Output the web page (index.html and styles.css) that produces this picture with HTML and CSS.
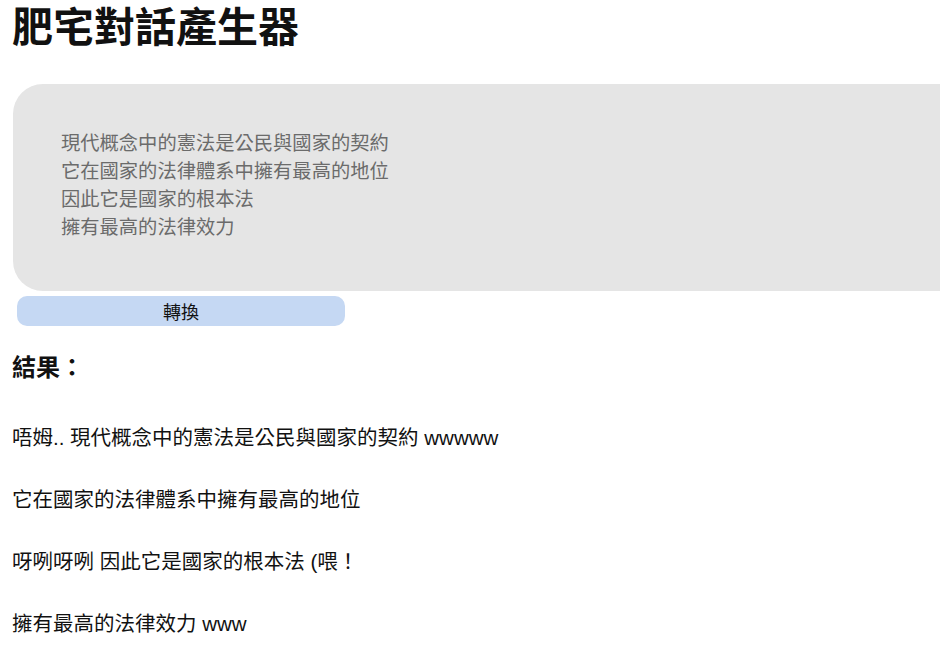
FILE: index.html
```html
<!DOCTYPE html>
<html>
<head>
    <meta charset="utf-8">
    <title>肥宅對話產生器</title>
    <link rel="stylesheet" href="styles.css">
</head>
<body>
    <h1 class="title">肥宅對話產生器</h1>

    <form id="convert_form" class="convert-form">
        <textarea id="source_text" class="source-text">現代概念中的憲法是公民與國家的契約
它在國家的法律體系中擁有最高的地位
因此它是國家的根本法
擁有最高的法律效力</textarea>
        <button type="submit" class="convert-button">轉換</button>
    </form>

    <h3 class="result-title">結果：</h3>

    <div id="result" class="result">
        <p>唔姆.. 現代概念中的憲法是公民與國家的契約 wwwww</p>
        <p>它在國家的法律體系中擁有最高的地位</p>
        <p>呀咧呀咧 因此它是國家的根本法 (喂！</p>
        <p>擁有最高的法律效力 www</p>
    </div>
</body>
</html>
```

FILE: styles.css
```css
body {
    font-family: "Liberation Sans", "Noto Sans CJK TC", sans-serif;
    margin: 0;
    padding: 0 12px;
    color: #111;
}

.title {
    font-size: 41px;
    line-height: 40px;
    margin: 8px 0 0;
}

/* the text box runs to the right edge of the window */
.convert-form {
    margin: 36px -12px 0 0;
}

.source-text {
    display: block;
    box-sizing: border-box;
    width: calc(100% - 1px);
    height: 207px;
    margin-left: 1px;
    padding: 46px 48px 49px;
    border: none;
    border-radius: 30px 0 0 30px;
    background-color: #e5e5e5;
    color: #6b6b6b;
    font-family: "Liberation Sans", "Noto Sans CJK TC", sans-serif;
    font-size: 19.3px;
    line-height: 28px;
    resize: none;
    overflow: hidden;
}

.convert-button {
    display: block;
    width: 328px;
    height: 30px;
    margin: 5px 0 0 5px;
    border: none;
    border-radius: 10px;
    background-color: #c5d8f3;
    color: #111;
    font-family: "Liberation Sans", "Noto Sans CJK TC", sans-serif;
    font-size: 18px;
    cursor: pointer;
}

.result-title {
    font-size: 24px;
    line-height: 34px;
    margin: 25px 0 0;
}

.result {
    margin-top: 38px;
    font-size: 20.5px;
}

.result p {
    margin: 0 0 32px;
    line-height: 30px;
}
```
